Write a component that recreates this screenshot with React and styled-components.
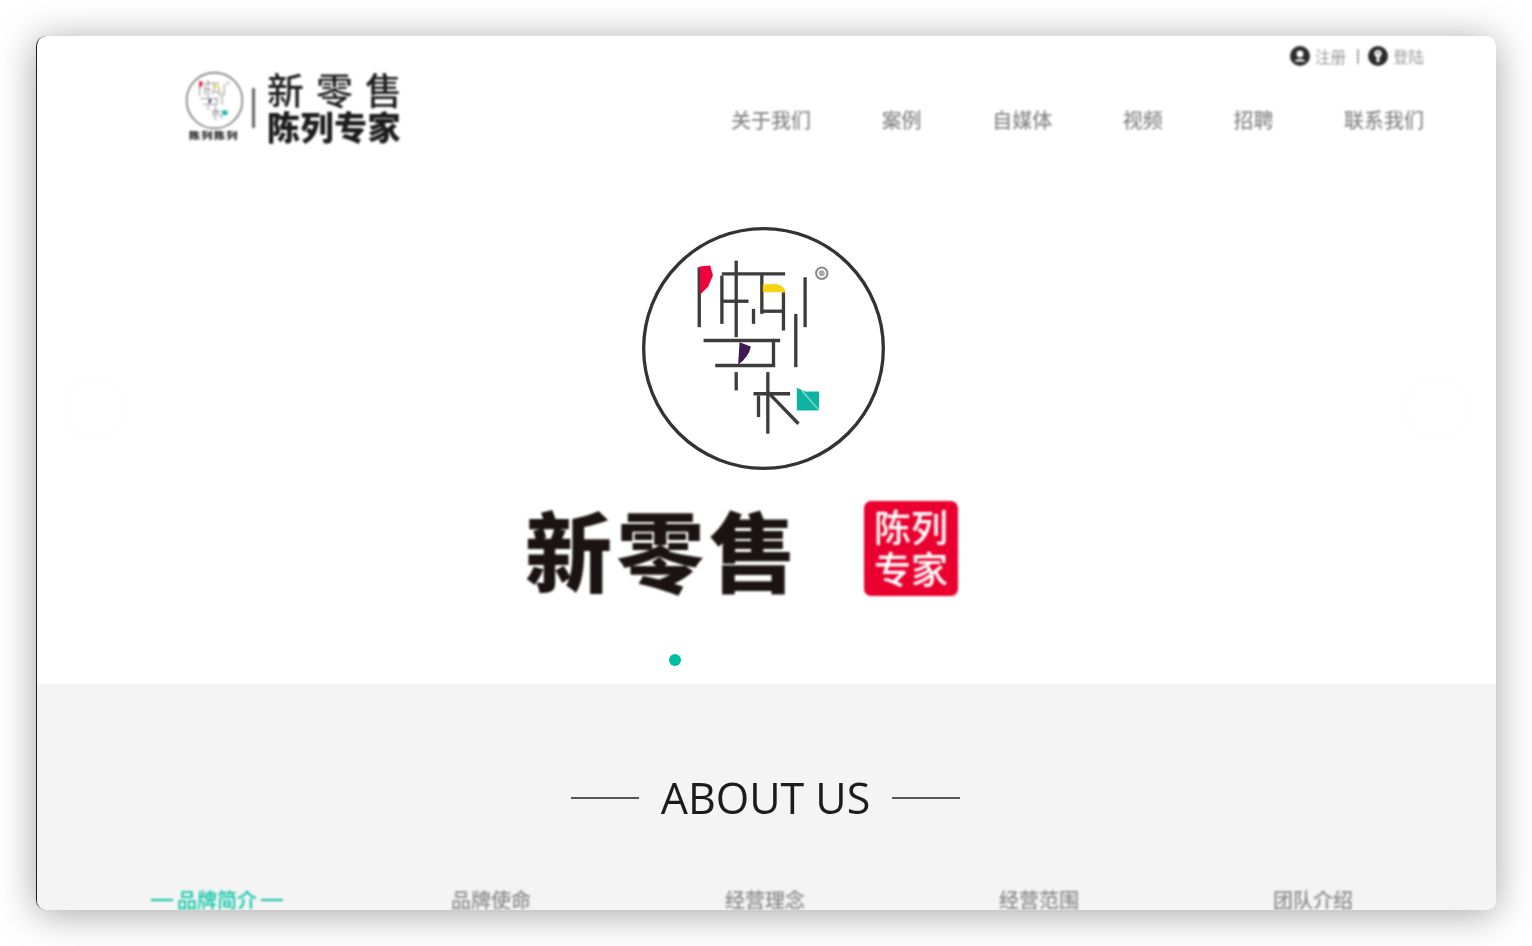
import React from "react";
import styled, { createGlobalStyle } from "styled-components";

const CJK = `"Noto Sans CJK SC", "Noto Sans", sans-serif`;

const Global = createGlobalStyle`
  html, body { margin: 0; padding: 0; background: #fff; }
  body { font-family: ${CJK}; overflow: hidden; }
`;

const Page = styled.div`
  width: 1532px;
  height: 946px;
  padding: 36px;
  box-sizing: border-box;
`;

const Card = styled.div`
  height: 874px;
  background: #fff;
  border-radius: 10px;
  border-left: 1px solid #1c1c1c;
  box-shadow: 0 4px 38px rgba(0, 0, 0, 0.36);
  overflow: hidden;
  display: flex;
  flex-direction: column;
`;

const Header = styled.header`
  height: 134px;
  flex: none;
  display: flex;
  justify-content: space-between;
  padding: 0 72px 0 148px;
  filter: blur(0.85px);
`;

const Logo = styled.div`
  display: flex;
  align-items: flex-start;
  padding-top: 33px;
`;

const LogoSeal = styled.div`
  width: 58px;
  margin-top: 3px;
  display: flex;
  flex-direction: column;
  align-items: center;
`;

const SealCaption = styled.span`
  font-size: 11px;
  line-height: 13px;
  font-weight: 900;
  color: #222;
  letter-spacing: 1.5px;
  white-space: nowrap;
  transform: scaleY(0.85);
`;

const LogoDivider = styled.span`
  width: 3px;
  height: 40px;
  background: #666;
  margin: 19px 12px 0 9px;
`;

const LogoWords = styled.div`
  display: flex;
  flex-direction: column;
  color: #1c1c1c;
`;

const LogoTop = styled.span`
  font-size: 37px;
  line-height: 40px;
  font-weight: 500;
  letter-spacing: 12px;
  white-space: nowrap;
`;

const LogoBottom = styled.span`
  font-size: 33px;
  line-height: 34px;
  font-weight: 900;
  letter-spacing: 0.5px;
  white-space: nowrap;
`;

const RightCol = styled.div`
  display: flex;
  flex-direction: column;
  align-items: flex-end;
`;

const UserLinks = styled.div`
  display: flex;
  align-items: center;
  height: 22px;
  margin: 9px 0 0 0;
`;

const UserLink = styled.a`
  display: flex;
  align-items: center;
  gap: 5px;
  font-size: 15.5px;
  color: #999;
`;

const Pipe = styled.span`
  width: 2px;
  height: 15px;
  background: #aaa;
  margin: 0 9px 0 11px;
`;

const Nav = styled.nav`
  display: flex;
  gap: 70.6px;
  margin-top: 38px;
`;

const NavItem = styled.a`
  font-size: 20px;
  line-height: 30px;
  font-weight: 500;
  color: #8c8c8c;
  white-space: nowrap;
`;

const Hero = styled.section`
  position: relative;
  height: 514px;
  flex: none;
  display: flex;
  flex-direction: column;
  align-items: center;
  padding-top: 56px;
  box-sizing: border-box;
`;

const HeroMark = styled.div`
  margin-right: 6px;
  height: 245px;
  filter: blur(0.7px);
`;

const HeroTitleRow = styled.div`
  display: flex;
  align-items: center;
  gap: 63px;
  margin: 30px 50px 0 0;
  filter: blur(0.9px);
`;

const HeroTitle = styled.h1`
  margin: 0;
  font-size: 87px;
  line-height: 95px;
  font-weight: 900;
  letter-spacing: 5px;
  color: #1a1311;
  white-space: nowrap;
`;

const Badge = styled.div`
  width: 94px;
  height: 95px;
  border-radius: 7px;
  background: #e9002f;
  color: #fff;
  font-size: 37px;
  line-height: 42px;
  font-weight: 500;
  text-align: center;
  padding-bottom: 3px;
  box-sizing: border-box;
  display: flex;
  flex-direction: column;
  justify-content: center;
`;

const Dot = styled.span`
  position: absolute;
  left: 632px;
  top: 484px;
  width: 12px;
  height: 12px;
  border-radius: 50%;
  background: #00bda5;
  filter: blur(0.5px);
`;

const Arrow = styled.span`
  position: absolute;
  top: 206px;
  ${(p) => (p.$side === "left" ? "left: 27px;" : "right: 27px;")}
  width: 64px;
  height: 64px;
  border-radius: 50%;
  border: 2px dashed #fcfcfc;
  box-sizing: border-box;
`;

const About = styled.section`
  flex: 1;
  background: #f4f4f4;
  display: flex;
  flex-direction: column;
  align-items: center;
  padding-top: 83px;
  overflow: hidden;
`;

const AboutHeading = styled.div`
  display: flex;
  align-items: center;
  gap: 22px;
  margin-right: 2px;
  filter: blur(0.5px);
`;

const HeadingRule = styled.span`
  width: 68px;
  height: 2px;
  background: #555;
`;

const HeadingText = styled.h2`
  margin: 0;
  font-family: "Open Sans", sans-serif;
  font-weight: 400;
  font-size: 43px;
  line-height: 62px;
  color: #1c1c1c;
  white-space: nowrap;
`;

const Tabs = styled.div`
  width: 1370px;
  display: grid;
  grid-template-columns: repeat(5, 1fr);
  margin: 56px 3px 0 0;
  filter: blur(0.85px);
`;

const Tab = styled.a`
  display: flex;
  justify-content: center;
  align-items: center;
  gap: 4px;
  font-size: 20px;
  line-height: 30px;
  font-weight: 500;
  color: ${(p) => (p.$active ? "#0cc4a4" : "#8c8c8c")};
  ${(p) =>
    p.$active &&
    `&::before, &::after { content: ""; width: 22px; height: 2px; background: #0cc4a4; }`}
`;

const LINES = [
  [237, 160, 237, 340],
  [348, 140, 348, 370],
  [348, 475, 348, 530],
  [305, 185, 305, 330],
  [305, 262, 385, 262],
  [305, 180, 495, 180],
  [425, 180, 425, 300],
  [425, 292, 490, 292],
  [490, 235, 490, 350],
  [400, 285, 400, 330],
  [555, 190, 555, 340],
  [527, 300, 527, 460],
  [250, 380, 480, 380],
  [460, 375, 460, 455],
  [285, 455, 465, 455],
  [400, 540, 510, 540],
  [443, 475, 443, 660],
  [443, 535, 535, 630],
  [415, 545, 415, 610],
];

function Mark({ size, ring = "#333", ink = "#3c3c3c", ringWidth = 10, inkWidth = 10 }) {
  return (
    <svg width={size} height={size} viewBox="62 36 736 736" style={{ display: "block" }}>
      <circle cx="430" cy="404" r="360" fill="#fff" stroke={ring} strokeWidth={ringWidth} />
      <g stroke={ink} strokeWidth={inkWidth}>
        {LINES.map((l, i) => (
          <line key={i} x1={l[0]} y1={l[1]} x2={l[2]} y2={l[3]} />
        ))}
      </g>
      <path d="M238 158 L270 155 L278 185 L264 218 L240 242 Z" fill="#f0003c" />
      <path d="M428 212 L470 210 Q492 216 498 235 L428 235 Z" fill="#f3d40f" />
      <path d="M358 385 L392 398 Q386 430 354 452 Z" fill="#3d1a55" />
      <path d="M530 522 L555 533 L597 533 L597 590 L530 590 Z" fill="#10b3a3" />
      <line x1="545" y1="530" x2="597" y2="590" stroke="#fff" strokeOpacity="0.5" strokeWidth="4" />
      <circle cx="605" cy="178" r="17" fill="#fff" stroke="#888" strokeWidth="6" />
      <circle cx="605" cy="178" r="9" fill="#aaa" />
    </svg>
  );
}

function UserIcon() {
  return (
    <svg width="20" height="20" viewBox="0 0 20 20">
      <circle cx="10" cy="10" r="10" fill="#2a2a2a" />
      <circle cx="10" cy="8" r="3.4" fill="#fff" />
      <path d="M4.5 15.5 C5 12 15 12 15.5 15.5 Z" fill="#fff" />
    </svg>
  );
}

function KeyIcon() {
  return (
    <svg width="20" height="20" viewBox="0 0 20 20">
      <circle cx="10" cy="10" r="10" fill="#2a2a2a" />
      <circle cx="10" cy="7.5" r="3.6" fill="#fff" />
      <rect x="8.6" y="9" width="2.8" height="7" fill="#fff" />
      <circle cx="10" cy="7" r="1" fill="#2a2a2a" />
    </svg>
  );
}

const NAV = ["关于我们", "案例", "自媒体", "视频", "招聘", "联系我们"];
const TABS = ["品牌简介", "品牌使命", "经营理念", "经营范围", "团队介绍"];

export default function App() {
  return (
    <Page>
      <Global />
      <Card>
        <Header>
          <Logo>
            <LogoSeal>
              <Mark size={57} ring="#777" ink="#999" ringWidth={20} inkWidth={14} />
              <SealCaption>陈列陈列</SealCaption>
            </LogoSeal>
            <LogoDivider />
            <LogoWords>
              <LogoTop>新零售</LogoTop>
              <LogoBottom>陈列专家</LogoBottom>
            </LogoWords>
          </Logo>
          <RightCol>
            <UserLinks>
              <UserLink>
                <UserIcon />
                注册
              </UserLink>
              <Pipe />
              <UserLink>
                <KeyIcon />
                登陆
              </UserLink>
            </UserLinks>
            <Nav>
              {NAV.map((n) => (
                <NavItem key={n}>{n}</NavItem>
              ))}
            </Nav>
          </RightCol>
        </Header>
        <Hero>
          <Arrow $side="left" />
          <Arrow $side="right" />
          <HeroMark>
            <Mark size={245} />
          </HeroMark>
          <HeroTitleRow>
            <HeroTitle>新零售</HeroTitle>
            <Badge>
              <span>陈列</span>
              <span>专家</span>
            </Badge>
          </HeroTitleRow>
          <Dot />
        </Hero>
        <About>
          <AboutHeading>
            <HeadingRule />
            <HeadingText>ABOUT US</HeadingText>
            <HeadingRule />
          </AboutHeading>
          <Tabs>
            {TABS.map((t, i) => (
              <Tab key={t} $active={i === 0}>
                {t}
              </Tab>
            ))}
          </Tabs>
        </About>
      </Card>
    </Page>
  );
}
